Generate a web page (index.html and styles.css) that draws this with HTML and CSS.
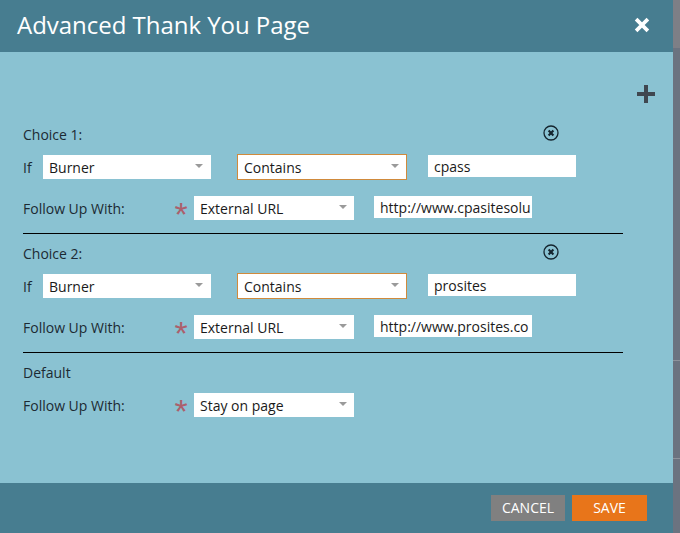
FILE: index.html
```html
<!DOCTYPE html>
<html lang="en">
<head>
<meta charset="utf-8">
<title>Advanced Thank You Page</title>
<link rel="stylesheet" href="styles.css">
</head>
<body>
<div class="page">
  <main class="modal">
    <header class="modal-header">
      <h1 class="modal-title">Advanced Thank You Page</h1>
      <svg class="close-icon" width="16" height="16" viewBox="0 0 16 16" aria-label="Close"><path d="M3 3 L13 13 M13 3 L3 13" stroke="#fff" stroke-width="4" stroke-linecap="square" fill="none" transform="translate(8 8) scale(.92) translate(-8 -8)"/></svg>
    </header>
    <div class="modal-body">
      <div class="add-row">
        <svg class="add-icon" width="18" height="18" viewBox="0 0 18 18" aria-label="Add"><path d="M0 7h7V0h4v7h7v4h-7v7H7v-7H0z" fill="#3f4750"/></svg>
      </div>

      <section class="choice">
        <div class="choice-head">
          <span class="label">Choice 1:</span>
          <svg class="remove-icon" width="16" height="16" viewBox="0 0 16 16" aria-label="Remove"><circle cx="8" cy="8" r="7" fill="none" stroke="#14242e" stroke-width="1.3"/><path d="M5.6 5.6l4.8 4.8M10.4 5.6l-4.8 4.8" stroke="#14242e" stroke-width="2.1" fill="none"/></svg>
        </div>
        <div class="if-row">
          <span class="label if-label">If</span>
          <div class="select select-field"><span>Burner</span><i class="caret"></i></div>
          <div class="select select-op"><span>Contains</span><i class="caret"></i></div>
          <div class="input input-value">cpass</div>
        </div>
        <div class="follow-row">
          <span class="label follow-label">Follow Up With:</span>
          <span class="star">*</span>
          <div class="select select-follow"><span>External URL</span><i class="caret"></i></div>
          <div class="input input-url">http://www.cpasitesolu</div>
        </div>
      </section>

      <section class="choice">
        <div class="choice-head">
          <span class="label">Choice 2:</span>
          <svg class="remove-icon" width="16" height="16" viewBox="0 0 16 16" aria-label="Remove"><circle cx="8" cy="8" r="7" fill="none" stroke="#14242e" stroke-width="1.3"/><path d="M5.6 5.6l4.8 4.8M10.4 5.6l-4.8 4.8" stroke="#14242e" stroke-width="2.1" fill="none"/></svg>
        </div>
        <div class="if-row">
          <span class="label if-label">If</span>
          <div class="select select-field"><span>Burner</span><i class="caret"></i></div>
          <div class="select select-op"><span>Contains</span><i class="caret"></i></div>
          <div class="input input-value">prosites</div>
        </div>
        <div class="follow-row">
          <span class="label follow-label">Follow Up With:</span>
          <span class="star">*</span>
          <div class="select select-follow"><span>External URL</span><i class="caret"></i></div>
          <div class="input input-url">http://www.prosites.co</div>
        </div>
      </section>

      <section class="choice choice-default">
        <div class="choice-head"><span class="label">Default</span></div>
        <div class="follow-row">
          <span class="label follow-label">Follow Up With:</span>
          <span class="star">*</span>
          <div class="select select-follow"><span>Stay on page</span><i class="caret"></i></div>
        </div>
      </section>
    </div>
    <footer class="modal-footer">
      <div class="btn btn-cancel">CANCEL</div>
      <div class="btn btn-save">SAVE</div>
    </footer>
  </main>
  <aside class="backdrop">
    <div class="backdrop-top"></div>
    <div class="backdrop-line line-one"></div>
    <div class="backdrop-line line-two"></div>
  </aside>
</div>
</body>
</html>
```

FILE: styles.css
```css
html, body {
  margin: 0;
  padding: 0;
}
body {
  width: 680px;
  height: 533px;
  overflow: hidden;
  font-family: "Open Sans", "Liberation Sans", sans-serif;
  font-size: 14px;
  color: #1c2a33;
}
.page {
  display: flex;
  height: 533px;
}
.modal {
  width: 673px;
  display: flex;
  flex-direction: column;
  background: #8ac2d2;
}
.modal-header {
  height: 52px;
  flex: none;
  display: flex;
  align-items: center;
  justify-content: space-between;
  padding: 0 23px 2px 17px;
  box-sizing: border-box;
  background: #477d90;
}
.modal-title {
  margin: 0;
  font-size: 24px;
  font-weight: 400;
  letter-spacing: -0.03px;
  color: #fff;
  line-height: 32px;
}
.close-icon {
  display: block;
}
.modal-body {
  flex: 1;
  min-height: 0;
  padding: 0 50px 0 23px;
}
.add-row {
  display: flex;
  justify-content: flex-end;
  height: 68px;
  margin-right: -32px;
  padding-top: 33px;
  box-sizing: border-box;
}
.add-icon {
  display: block;
}
.choice {
  height: 113px;
  margin-bottom: 5px;
  border-bottom: 1px solid #000;
}
.choice-default {
  border-bottom: 0;
  margin-bottom: 0;
  height: 59px;
}
.choice-head {
  height: 30px;
  margin-bottom: 5px;
  display: flex;
  align-items: center;
  justify-content: space-between;
  padding-right: 64px;
}
.remove-icon {
  margin-top: -4px;
}
.label {
  line-height: 20px;
}
.if-row {
  display: flex;
  align-items: flex-start;
  height: 41px;
}
.if-label {
  width: 20px;
  line-height: 26px;
}
.follow-row {
  display: flex;
  align-items: flex-start;
}
.follow-label {
  width: 153px;
  line-height: 25px;
}
.star {
  width: 18px;
  margin-left: -4px;
  margin-right: 4px;
  color: #ac5f6c;
  font-size: 34px;
  line-height: 36px;
  height: 24px;
  font-family: "Liberation Sans", sans-serif;
  text-align: center;
}
.select {
  height: 24px;
  background: #fff;
  display: flex;
  align-items: center;
  justify-content: space-between;
  padding: 1px 7px 0 6px;
  box-sizing: border-box;
  color: #1a1a1a;
}
.caret {
  width: 0;
  height: 0;
  border-left: 4px solid transparent;
  border-right: 4px solid transparent;
  border-top: 4px solid #9a9a9a;
  margin-bottom: 4px;
}
.select-field {
  width: 168px;
  padding-right: 8px;
}
.select-op {
  width: 170px;
  height: 26px;
  margin: -1px 0 0 26px;
  border: 1px solid #d08a3c;
}
.select-follow {
  width: 160px;
}
.input {
  background: #fff;
  height: 22px;
  line-height: 24px;
  padding-left: 6px;
  box-sizing: border-box;
  overflow: hidden;
  white-space: nowrap;
  color: #1a1a1a;
}
.input-value {
  width: 148px;
  margin-left: 21px;
}
.input-url {
  width: 158px;
  margin-left: 20px;
}
.modal-footer {
  height: 50px;
  flex: none;
  display: flex;
  justify-content: flex-end;
  gap: 7px;
  padding: 12px 26px 0 0;
  box-sizing: border-box;
  background: #477d90;
}
.btn {
  height: 26px;
  line-height: 26px;
  text-align: center;
  color: #fff;
}
.btn-cancel {
  width: 74px;
  background: #808080;
}
.btn-save {
  width: 75px;
  background: #e8751a;
}
.backdrop {
  width: 7px;
  background: #6b7380;
}
.backdrop-top {
  height: 48px;
  background: #7e7f86;
}
.backdrop-line {
  height: 1px;
  background: #8e939c;
}
.line-one {
  margin-top: 312px;
}
.line-two {
  margin-top: 97px;
}
```
